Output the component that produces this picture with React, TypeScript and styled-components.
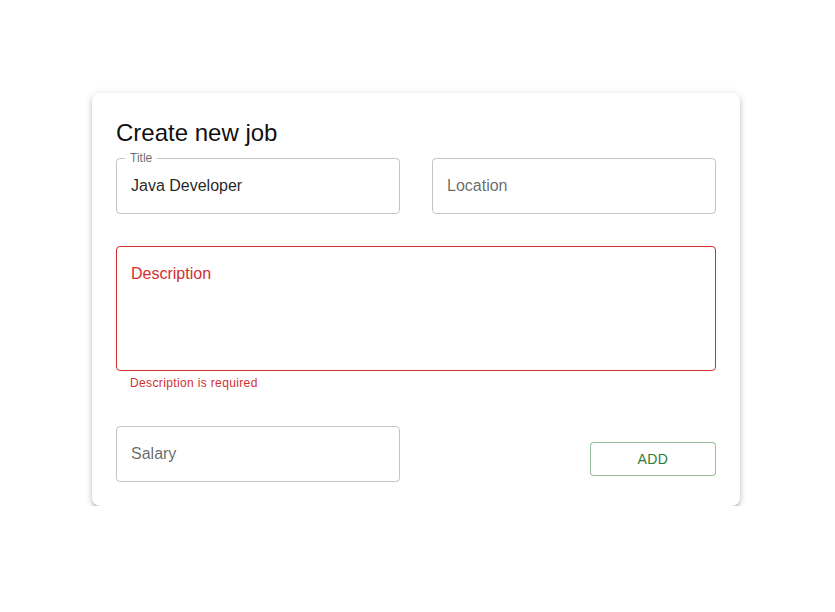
import React from 'react';
import styled, { createGlobalStyle } from 'styled-components';

const GlobalStyle = createGlobalStyle`
  * { box-sizing: border-box; }
  body {
    margin: 0;
    background: #fff;
    font-family: "Liberation Sans", Arial, sans-serif;
  }
`;

const Page = styled.div`
  padding: 93px 0 0 92px;
`;

const Card = styled.div`
  width: 648px;
  padding: 24px;
  background: #fff;
  border-radius: 8px;
  box-shadow: 0px 3px 3px -2px rgba(0, 0, 0, 0.25), 0px 3px 5px 0px rgba(0, 0, 0, 0.16),
    0px 1px 8px 0px rgba(0, 0, 0, 0.12);
`;

const Heading = styled.h5`
  margin: 0 0 9px;
  font-size: 24px;
  line-height: 32px;
  font-weight: 400;
  color: rgba(0, 0, 0, 0.95);
`;

const FormGrid = styled.div`
  display: grid;
  grid-template-columns: 1fr 1fr;
  column-gap: 32px;
  row-gap: 32px;
`;

const Field = styled.div<{ $wide?: boolean }>`
  position: relative;
  grid-column: ${p => (p.$wide ? '1 / span 2' : 'auto')};
`;

const Box = styled.div<{ $error?: boolean; $tall?: boolean }>`
  position: relative;
  height: ${p => (p.$tall ? '125px' : '56px')};
  border: 1px solid ${p => (p.$error ? '#d32f2f' : 'rgba(0, 0, 0, 0.23)')};
  border-radius: 4px;
  padding: ${p => (p.$tall ? '14.5px 14px' : '0 14px 2px')};
  display: flex;
  align-items: ${p => (p.$tall ? 'flex-start' : 'center')};
  font-size: 16px;
  line-height: 23px;
`;

const Value = styled.span`
  color: rgba(0, 0, 0, 0.87);
`;

const Placeholder = styled.span<{ $error?: boolean }>`
  color: ${p => (p.$error ? '#d32f2f' : 'rgba(0, 0, 0, 0.6)')};
`;

const FloatLabel = styled.span`
  position: absolute;
  left: 9px;
  top: -7px;
  padding: 0 5px;
  background: #fff;
  font-size: 12px;
  line-height: 14px;
  color: rgba(0, 0, 0, 0.6);
`;

const Helper = styled.div`
  margin: 2px 14px 0;
  padding-bottom: 1px;
  font-size: 12px;
  line-height: 20px;
  letter-spacing: 0.03em;
  color: #d32f2f;
`;

const Actions = styled.div`
  display: flex;
  justify-content: flex-end;
  align-items: flex-end;
  padding-bottom: 6px;
`;

const OutlineButton = styled.button`
  width: 126px;
  height: 34px;
  border: 1px solid rgba(46, 125, 50, 0.5);
  border-radius: 4px;
  background: #fff;
  color: #2e7d32;
  font-family: "Liberation Sans", Arial, sans-serif;
  font-size: 14px;
  letter-spacing: 0.4px;
  text-transform: uppercase;
  cursor: pointer;
`;

export default function App() {
  return (
    <Page>
      <GlobalStyle />
      <Card>
        <Heading>Create new job</Heading>
        <FormGrid>
          <Field>
            <Box>
              <Value>Java Developer</Value>
            </Box>
            <FloatLabel>Title</FloatLabel>
          </Field>
          <Field>
            <Box>
              <Placeholder>Location</Placeholder>
            </Box>
          </Field>
          <Field $wide>
            <Box $error $tall>
              <Placeholder $error>Description</Placeholder>
            </Box>
            <Helper>Description is required</Helper>
          </Field>
          <Field>
            <Box>
              <Placeholder>Salary</Placeholder>
            </Box>
          </Field>
          <Actions>
            <OutlineButton>Add</OutlineButton>
          </Actions>
        </FormGrid>
      </Card>
    </Page>
  );
}
